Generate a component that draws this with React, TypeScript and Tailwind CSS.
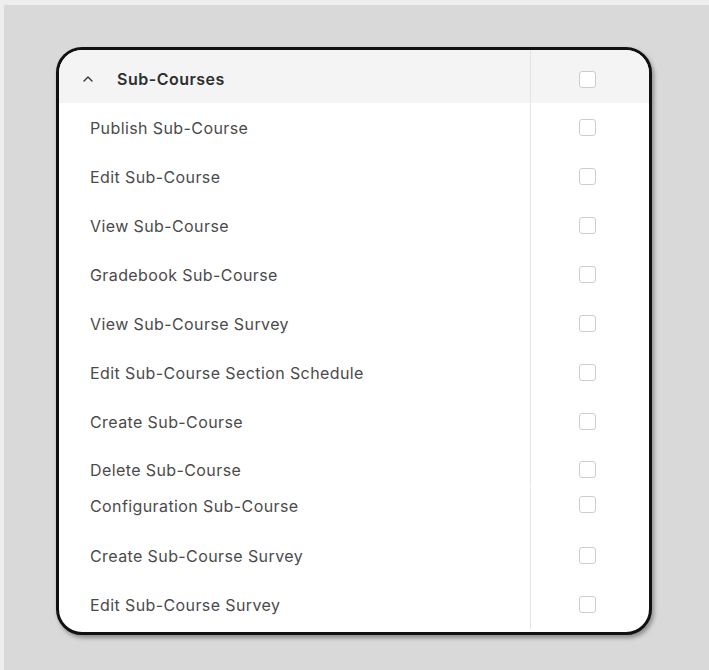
import { ChevronUp } from "lucide-react";

const groupOne = [
  "Publish Sub-Course",
  "Edit Sub-Course",
  "View Sub-Course",
  "Gradebook Sub-Course",
  "View Sub-Course Survey",
  "Edit Sub-Course Section Schedule",
  "Create Sub-Course",
];

const groupTwo = ["Create Sub-Course Survey", "Edit Sub-Course Survey"];

function Checkbox() {
  return <span className="block w-[17px] h-[17px] rounded-[3px] border-[1.5px] border-[#cdcdcd] bg-white" />;
}

function Row({ label }: { label: string }) {
  return (
    <div className="flex h-[49px] items-center">
      <div className="flex-1 pl-[31px] text-[16px] tracking-[0.4px] text-[#4b4b4b]">{label}</div>
      <div className="w-[119px] self-stretch border-l border-[#e4e4e4] flex items-center justify-center pr-[5px]">
        <Checkbox />
      </div>
    </div>
  );
}

export default function App() {
  return (
    <div className="h-[670px] bg-[#eeeeee] pt-[5px] pl-[4px]" style={{ fontFamily: "Inter, 'Liberation Sans', sans-serif" }}>
      <div className="h-full bg-[#d9d9d9] pt-[42px] pl-[52px]">
        <div className="w-[596px] h-[588px] rounded-[26px] border-[3px] border-[#111] bg-white overflow-hidden shadow-[2px_3px_4px_rgba(0,0,0,0.35)]">
          <div className="flex h-[53px] bg-[#f4f4f4]">
            <div className="flex-1 flex items-center pl-[21px] pt-[5px]">
              <ChevronUp size={16} strokeWidth={2} className="text-[#333]" />
              <span className="ml-[21px] text-[16px] tracking-[0.5px] font-semibold text-[#2e2e2e]">Sub-Courses</span>
            </div>
            <div className="w-[119px] border-l border-[#e4e4e4] flex items-center justify-center pr-[5px] pt-[5px]">
              <Checkbox />
            </div>
          </div>
          {groupOne.map((l) => (
            <Row key={l} label={l} />
          ))}
          <div className="flex h-[40px]">
            <div className="flex-1 pl-[31px] pt-[12px] text-[16px] tracking-[0.4px] text-[#4b4b4b]">Delete Sub-Course</div>
            <div className="w-[119px] border-l border-[#e4e4e4] flex justify-center pt-[15px] pr-[5px]">
              <Checkbox />
            </div>
          </div>
          <div className="flex h-[44px] mt-px">
            <div className="flex-1 pl-[31px] pt-[7px] text-[16px] tracking-[0.4px] text-[#4b4b4b]">Configuration Sub-Course</div>
            <div className="w-[119px] border-l border-[#e4e4e4] flex justify-center pt-[9px] pr-[5px]">
              <Checkbox />
            </div>
          </div>
          {groupTwo.map((l) => (
            <Row key={l} label={l} />
          ))}
        </div>
      </div>
    </div>
  );
}
